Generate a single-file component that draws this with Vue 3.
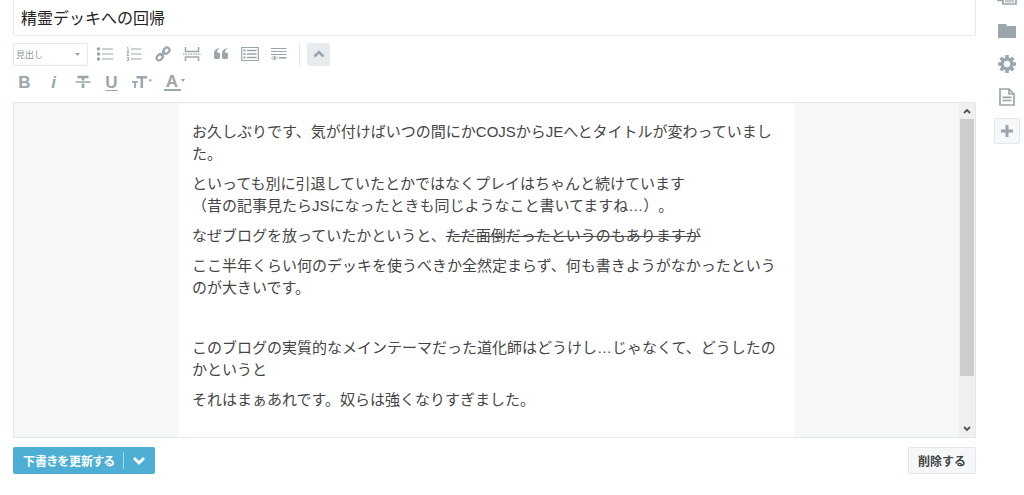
<script setup>
import { ref } from 'vue'

const title = ref('精霊デッキへの回帰')
const heading = ref('見出し')
</script>

<template>
  <div class="app">
    <main class="main">
      <input v-model="title" class="title" type="text" aria-label="タイトル" />

      <div class="toolbar">
        <div class="row">
          <div class="pick">
            <select v-model="heading" aria-label="見出し">
              <option>見出し</option>
            </select>
            <svg width="5" height="3" viewBox="0 0 5 3"><path d="M0 0h5L2.5 3z" fill="currentColor" /></svg>
          </div>
          <button class="tool" type="button" aria-label="箇条書き">
            <svg width="18" height="16" viewBox="0 0 18 16" fill="currentColor">
              <circle cx="2.5" cy="3" r="1.7" /><circle cx="2.5" cy="8" r="1.7" /><circle cx="2.5" cy="13" r="1.7" />
              <path d="M6 2.400h11v1.200H6zM6 7.400h11v1.200H6zM6 12.400h11v1.200H6z" />
            </svg>
          </button>
          <button class="tool" type="button" aria-label="番号付きリスト">
            <svg width="18" height="16" viewBox="0 0 18 16" fill="none" stroke="currentColor">
              <path d="M6 3h10.500M6 8h10.500M6 13h10.500" stroke-width="1.200" />
              <path d="M2 2l1-.7V5M2 5h2M1.700 6.500h2L2 9.500h2.200M1.700 11.500h2.100v3H1.700M2.200 13h1.600" stroke-width=".9" />
            </svg>
          </button>
          <button class="tool" type="button" aria-label="リンク">
            <svg width="16" height="16" viewBox="0 0 16 16" fill="none" stroke="currentColor" stroke-width="2.200">
              <rect x="7.800" y="2.200" width="7" height="5" rx="2.500" transform="rotate(-45 11.300 4.700)" />
              <rect x="1.200" y="8.800" width="7" height="5" rx="2.500" transform="rotate(-45 4.700 11.300)" />
              <path d="M5.700 10.200l4.600-4.500" stroke-width="1.800" />
            </svg>
          </button>
          <button class="tool" type="button" aria-label="続きを読む">
            <svg width="18" height="16" viewBox="0 0 18 16" fill="none" stroke="currentColor">
              <path d="M2.500 1v4.500h13V1M2.500 15v-4h13v4" stroke-width="1.500" />
              <path d="M0 8.200h18" stroke-width="1.300" stroke-dasharray="1.500 1" />
            </svg>
          </button>
          <button class="tool" type="button" aria-label="引用">
            <svg width="16" height="14" viewBox="0 0 16 14" fill="currentColor">
              <path d="M7 1.500C4.800 2 4 3.500 4 5.500h1.500Q7 5.500 7 7v3.500Q7 12 5.500 12h-3Q1 12 1 10.500V6.500C1 3.500 3.200 1.300 7 1.300zM15 1.500c-2.200.5-3 2-3 4h1.500Q15 5.500 15 7v3.500q0 1.500-1.500 1.500h-3Q9 12 9 10.500v-4c0-3 2.200-5.200 6-5.200z" />
            </svg>
          </button>
          <button class="tool" type="button" aria-label="目次">
            <svg width="18" height="16" viewBox="0 0 18 16" fill="none" stroke="currentColor">
              <path d="M.7 1.500h16.600v13H.7z" stroke-width="1.200" />
              <path d="M2.500 4.500h2M2.500 8h2M2.500 11.500h2" stroke-width="1.800" />
              <path d="M6 4.500h9.500M6 8h9.500M6 11.500h9.500" stroke-width="1.300" />
            </svg>
          </button>
          <button class="tool" type="button" aria-label="脚注">
            <svg width="16" height="16" viewBox="0 0 16 16" fill="none" stroke="currentColor">
              <path d="M0 2.500h15.500M0 5.500h15.500M0 8.500h15.500" stroke-width="1.200" />
              <path d="M8 11.800h7.500" stroke-width="1.600" />
              <path d="M1.500 10l4 4M5.500 10l-4 4M0 12h7M3.500 9.500v5" stroke-width=".8" />
            </svg>
          </button>
          <span class="divider"></span>
          <button class="fold" type="button" aria-label="折りたたむ">
            <svg width="12" height="8" viewBox="0 0 12 8" fill="none" stroke="currentColor" stroke-width="2.600"><path d="M1.500 6.500L6 2l4.500 4.500" /></svg>
          </button>
        </div>

        <div class="row second">
          <button class="tool letter" type="button" aria-label="太字">B</button>
          <button class="tool letter italic" type="button" aria-label="斜体">i</button>
          <button class="tool" type="button" aria-label="取り消し線">
            <svg width="16" height="14" viewBox="0 0 16 14" fill="none" stroke="currentColor">
              <path d="M2.500 2h11M8 2v3.500M8 8.500V13" stroke-width="2.600" /><path d="M.5 7h15" stroke-width="1.500" />
            </svg>
          </button>
          <button class="tool letter under" type="button" aria-label="下線">U</button>
          <button class="tool wide" type="button" aria-label="文字サイズ">
            <svg width="22" height="14" viewBox="0 0 22 14" fill="none" stroke="currentColor">
              <path d="M5.500 2.200H16M10.800 2v11" stroke-width="2.600" /><path d="M1 6.800h6M4 6v7" stroke-width="1.800" />
              <path d="M17.500 4.500h3.500L19.200 7z" fill="currentColor" stroke="none" />
            </svg>
          </button>
          <button class="tool wide color" type="button" aria-label="文字色">
            <span>A</span>
            <svg width="4" height="3" viewBox="0 0 4 3"><path d="M0 0h4L2 3z" fill="currentColor" /></svg>
          </button>
        </div>
      </div>

      <section class="editor">
        <div class="viewport">
          <article class="page" contenteditable="true" aria-label="本文">
            <p>お久しぶりです、気が付けばいつの間にかCOJSからJEへとタイトルが変わっていました。</p>
            <p>といっても別に引退していたとかではなくプレイはちゃんと続けています<br />（昔の記事見たらJSになったときも同じようなこと書いてますね…）。</p>
            <p>なぜブログを放っていたかというと、<del>ただ面倒だったというのもありますが</del></p>
            <p>ここ半年くらい何のデッキを使うべきか全然定まらず、何も書きようがなかったというのが大きいです。</p>
            <p><br /></p>
            <p>このブログの実質的なメインテーマだった道化師はどうけし…じゃなくて、どうしたのかというと</p>
            <p>それはまぁあれです。奴らは強くなりすぎました。</p>
          </article>
        </div>
        <div class="scrollbar">
          <svg width="8" height="6" viewBox="0 0 8 6" fill="none" stroke="currentColor" stroke-width="1.800"><path d="M1 5l3-3 3 3" /></svg>
          <div class="track"><div class="thumb"></div></div>
          <svg width="8" height="6" viewBox="0 0 8 6" fill="none" stroke="currentColor" stroke-width="1.800"><path d="M1 1l3 3 3-3" /></svg>
        </div>
      </section>

      <footer class="footer">
        <div class="save">
          <button class="save-main" type="button">下書きを更新する</button>
          <button class="save-more" type="button" aria-label="その他">
            <svg width="14" height="10" viewBox="0 0 14 10" fill="none" stroke="currentColor" stroke-width="2.800"><path d="M2 2l5 5 5-5" /></svg>
          </button>
        </div>
        <button class="delete" type="button">削除する</button>
      </footer>
    </main>

    <aside class="side">
      <button type="button" class="photos" aria-label="写真">
        <svg width="20" height="16" viewBox="0 0 20 16" fill="none" stroke="currentColor" stroke-width="1.700">
          <path d="M6 4h13v11H6z" /><path d="M1 0v11.500h5" /><path d="M8 11h9v2.500H8z" fill="currentColor" stroke="none" opacity=".6" />
        </svg>
      </button>
      <button type="button" aria-label="カテゴリー">
        <svg width="20" height="16" viewBox="0 0 20 16" fill="currentColor"><path d="M1 1h8l1 2h9v12H1z" /></svg>
      </button>
      <button type="button" aria-label="設定">
        <svg width="18" height="18" viewBox="-9 -9 18 18" fill="none" stroke="currentColor">
          <circle r="4.900" stroke-width="3.400" />
          <path d="M0-9v3M0 9V6M-9 0h3M9 0H6M-6.300-6.300l2 2M6.300-6.300l-2 2M-6.300 6.300l2-2M6.300 6.300l-2-2" stroke-width="3.600" />
        </svg>
      </button>
      <button type="button" aria-label="下書き">
        <svg width="16" height="18" viewBox="0 0 16 18" fill="none" stroke="currentColor" stroke-width="1.700">
          <path d="M1 1h9l5 5v11H1z" /><path d="M10 1v5h5M3.500 9.300h9M3.500 12.500h9" />
        </svg>
      </button>
      <button type="button" class="add" aria-label="追加">
        <svg width="12" height="12" viewBox="0 0 12 12" fill="none" stroke="currentColor" stroke-width="3"><path d="M6 0v12M0 6h12" /></svg>
      </button>
    </aside>
  </div>
</template>

<style>
body {
  background: #fff;
}
</style>

<style scoped>
.app {
  display: flex;
  min-height: 100vh;
  overflow: hidden;
  color: #454545;
  font-family: "Liberation Sans", "Noto Sans CJK JP", sans-serif;
}
.app * {
  box-sizing: border-box;
}
button {
  display: flex;
  align-items: center;
  justify-content: center;
  margin: 0;
  padding: 0;
  border: 0;
  background: none;
  color: inherit;
  font-family: inherit;
}
svg {
  display: block;
  flex: none;
}
.main {
  flex: 1;
  min-width: 0;
  padding-left: 13px;
}
.title {
  display: block;
  width: 100%;
  height: 36px;
  padding: 0 7px 2px;
  border: 1px solid #e6eaeb;
  border-top: 0;
  border-radius: 0 0 2px 2px;
  outline: 0;
  color: #222;
  font-family: inherit;
  font-size: 16px;
}
.toolbar {
  padding: 6px 0 4px;
  color: #9aa6ac;
}
.row {
  display: flex;
  align-items: center;
  height: 24px;
}
.second {
  height: 32px;
  margin-left: -3px;
}
.pick {
  display: flex;
  align-items: center;
  width: 75px;
  height: 23px;
  margin-right: 2px;
  padding-right: 7px;
  border: 1px solid #e1e8ea;
  border-radius: 2px;
}
.pick select {
  flex: 1;
  min-width: 0;
  height: 21px;
  padding: 2px 2px 0;
  border: 0;
  background: none;
  color: #8b979d;
  appearance: none;
  font-family: inherit;
  font-size: 9px;
}
.tool {
  width: 29px;
  height: 24px;
}
.letter {
  font-size: 17px;
  font-weight: bold;
  line-height: 17px;
}
.italic {
  font-style: italic;
}
.under {
  text-decoration: underline;
  text-decoration-thickness: 1px;
  text-underline-offset: 2px;
}
.wide {
  width: 32px;
}
.color {
  align-items: flex-start;
  padding-top: 4px;
}
.color span {
  width: 17px;
  height: 17px;
  border-bottom: 2px solid;
  font-size: 17px;
  font-weight: bold;
  line-height: 16px;
}
.color svg {
  margin-top: 5px;
}
.divider {
  width: 1px;
  height: 23px;
  margin: 0 7px 0 6px;
  background: #e1e6e8;
}
.fold {
  width: 23px;
  height: 23px;
  border-radius: 2px;
  background: #e8ecee;
}
.editor {
  display: flex;
  height: 336px;
  border: 1px solid #e1e8ea;
  background: #f6f7f9;
}
.viewport {
  display: flex;
  flex: 1;
  justify-content: center;
  min-width: 0;
  overflow: hidden;
}
.page {
  width: 617px;
  padding: 18px 14px;
  background: #fff;
  outline: 0;
  font-size: 15px;
  line-height: 22px;
  text-spacing-trim: space-all;
}
.page p {
  margin: 0 0 8px;
}
.scrollbar {
  display: flex;
  flex-direction: column;
  align-items: center;
  gap: 5px;
  width: 16px;
  padding: 5px 0;
  background: #f0f0f0;
  color: #505050;
}
.track {
  flex: 1;
  width: 14px;
}
.thumb {
  height: 85%;
  background: #cdcdcd;
}
.footer {
  display: flex;
  justify-content: space-between;
  padding-top: 9px;
}
.save {
  display: flex;
  align-items: center;
  height: 27px;
  border-radius: 2px;
  background: #4dafd4;
  color: #fff;
}
.save button {
  height: 17px;
}
.save-main {
  padding: 0 8px 0 10px;
  font-size: 12px;
  font-weight: bold;
  font-feature-settings: "palt";
}
.save .save-more {
  width: 32px;
  border-left: 1px solid #a6d7e9;
}
.delete {
  width: 68px;
  height: 27px;
  border: 1px solid #e1e8ea;
  border-radius: 2px;
  background: #f6f7f9;
  font-size: 12px;
  font-weight: bold;
}
.side {
  display: flex;
  flex-direction: column;
  align-items: center;
  width: 48px;
  padding-left: 14px;
  color: #9aa6ac;
}
.side button {
  width: 26px;
  height: 33px;
}
.side .photos {
  align-items: flex-end;
  height: 5px;
  margin-bottom: 9px;
}
.side .add {
  height: 26px;
  margin-top: 5px;
  border: 1px solid #e1e8ea;
  border-radius: 2px;
  background: #f6f7f9;
}
</style>
